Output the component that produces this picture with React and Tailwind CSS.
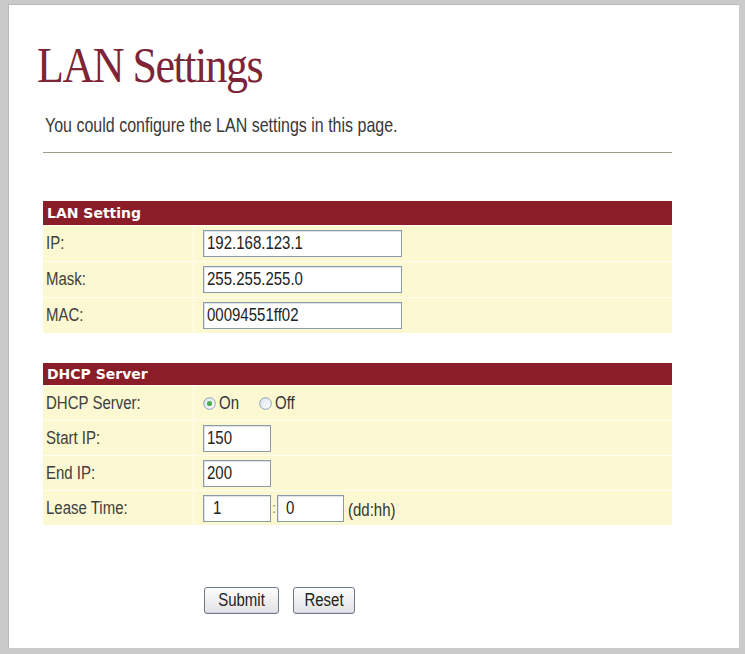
import React from "react";

const sans = "font-['Liberation_Sans','Arial',sans-serif]";
const tall = "inline-block scale-y-[1.22]";

function TextBox({ value, w = "w-[199px]", pad = "pl-[3px]" }) {
  return (
    <div
      className={`${w} h-[27px] ${pad} flex items-center bg-white border border-[#8a9bab] shadow-[inset_1px_1px_0_#dfe3e8] text-[15px] text-[#222] ${sans}`}
    >
      <span className={tall}>{value}</span>
    </div>
  );
}

function Radio({ checked }) {
  return (
    <svg width="13" height="13" viewBox="0 0 13 13" className="shrink-0">
      <defs>
        <linearGradient id={checked ? "rg1" : "rg2"} x1="0" y1="0" x2="1" y2="1">
          <stop offset="0" stopColor="#dce3ea" />
          <stop offset="1" stopColor="#ffffff" />
        </linearGradient>
      </defs>
      <circle cx="6.5" cy="6.5" r="5.8" fill={`url(#${checked ? "rg1" : "rg2"})`} stroke="#8aa0b8" strokeWidth="1" />
      {checked && <circle cx="6.5" cy="6.5" r="2.6" fill="#4faa50" />}
    </svg>
  );
}

function Row({ label, h = "h-[35px]", children }) {
  return (
    <div className={`grid grid-cols-[150px_1fr] gap-px ${h}`}>
      <div className={`bg-[#fcf8d1] pl-[3px] flex items-center text-[15px] text-[#404040] ${sans}`}>
        <span className={tall}>{label}</span>
      </div>
      <div className="bg-[#fcf8d1] pl-[9px] flex items-center">{children}</div>
    </div>
  );
}

function Header({ title, h }) {
  return (
    <div className={`${h} bg-[#8b1d28] pl-[4px] flex items-center text-white font-bold text-[14px] font-['DejaVu_Sans',sans-serif]`}>
      {title}
    </div>
  );
}

export default function App() {
  return (
    <div className="w-[745px] h-[654px] bg-white border-[#cacaca] border-t-4 border-l-8 border-r-[6px] border-b-[6px] shadow-[inset_1px_1px_0_#b9b9b9] flex flex-col">
      <h1 className="mt-[40px] ml-[29px] text-[44px] leading-[44px] tracking-[-1.5px] text-[#7d2437] font-['Liberation_Serif','Times_New_Roman',serif]">
        <span className="inline-block scale-y-[1.14]">LAN Settings</span>
      </h1>
      <div className="ml-[35px] w-[629px] flex flex-col">
        <p className={`mt-[28px] pl-[2px] text-[16px] leading-[20px] text-[#383838] ${sans}`}>
          <span className={tall}>You could configure the LAN settings in this page.</span>
        </p>
        <div className="mt-[16px] h-px bg-[#9c9e8e]" />

        <div className="mt-[48px] flex flex-col gap-px bg-[#fffdf0]">
          <Header title="LAN Setting" h="h-[24px]" />
          <Row label="IP:">
            <TextBox value="192.168.123.1" />
          </Row>
          <Row label="Mask:">
            <TextBox value="255.255.255.0" />
          </Row>
          <Row label="MAC:">
            <TextBox value="00094551ff02" />
          </Row>
        </div>

        <div className="mt-[30px] flex flex-col gap-px bg-[#fffdf0]">
          <Header title="DHCP Server" h="h-[22px]" />
          <Row label="DHCP Server:" h="h-[34px]">
            <div className={`flex items-center text-[15px] text-[#333] ${sans}`}>
              <Radio checked />
              <span className={`ml-[3px] ${tall}`}>On</span>
              <span className="ml-[20px]" />
              <Radio />
              <span className={`ml-[3px] ${tall}`}>Off</span>
            </div>
          </Row>
          <Row label="Start IP:" h="h-[34px]">
            <TextBox value="150" w="w-[68px]" />
          </Row>
          <Row label="End IP:" h="h-[34px]">
            <TextBox value="200" w="w-[68px]" />
          </Row>
          <Row label="Lease Time:" h="h-[34px]">
            <div className={`flex items-center text-[15px] text-[#333] ${sans}`}>
              <TextBox value="1" w="w-[68px]" pad="pl-[9px]" />
              <span className="w-[6px] text-center text-[#888]">:</span>
              <TextBox value="0" w="w-[67px]" pad="pl-[8px]" />
              <span className={`ml-[4px] mt-[4px] ${tall}`}>(dd:hh)</span>
            </div>
          </Row>
        </div>

        <div className={`mt-[62px] ml-[161px] flex gap-[14px] text-[15px] text-[#222] ${sans}`}>
          <button className="w-[75px] h-[27px] rounded-[3px] border border-[#6d7889] bg-gradient-to-b from-[#fdfdfd] to-[#e2e2e6] shadow-[inset_0_-1px_0_#cfd0d6]">
            <span className={tall}>Submit</span>
          </button>
          <button className="w-[62px] h-[27px] rounded-[3px] border border-[#6d7889] bg-gradient-to-b from-[#fdfdfd] to-[#e2e2e6] shadow-[inset_0_-1px_0_#cfd0d6]">
            <span className={tall}>Reset</span>
          </button>
        </div>
      </div>
    </div>
  );
}
